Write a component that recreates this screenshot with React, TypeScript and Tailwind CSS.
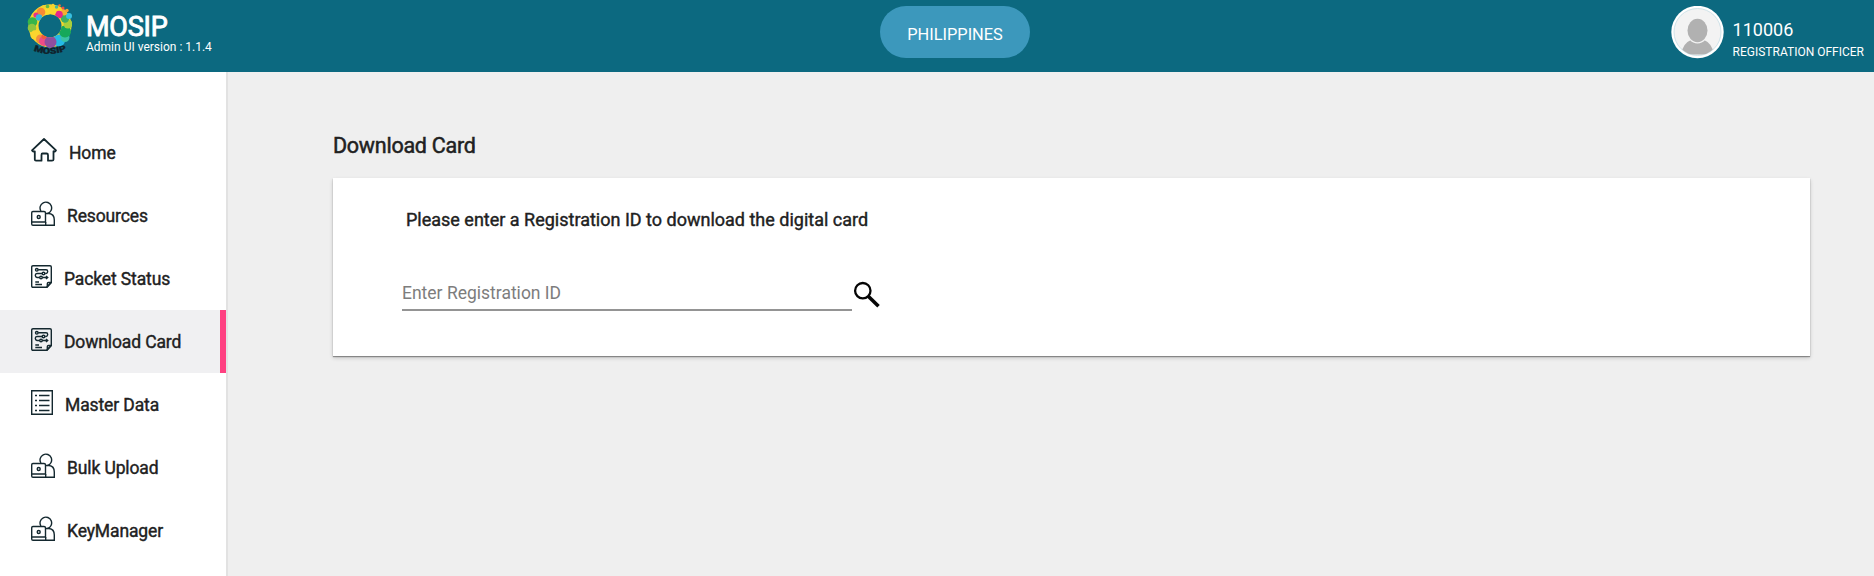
import React from "react";

function MosipLogo() {
  return (
    <svg width="49" height="56" viewBox="0 0 49 56" className="block">
      <defs>
        <clipPath id="ring">
          <path clipRule="evenodd" d="M0 0H47V56H0Z M25 14.200a11.500 11.500 0 1 0 .01 0Z" />
        </clipPath>
      </defs>
      <g clipPath="url(#ring)">
        <circle cx="25" cy="25.700" r="16" fill="none" stroke="#f6d52b" strokeWidth="11" />
        <circle cx="7.500" cy="22" r="4.800" fill="#36b54a" />
        <circle cx="7" cy="28" r="4.300" fill="#8fc43f" />
        <circle cx="10" cy="35" r="4.700" fill="#fbd52e" />
        <circle cx="15.500" cy="39" r="4.500" fill="#f4903a" />
        <circle cx="19" cy="41" r="5" fill="#ee4c86" />
        <circle cx="19" cy="36.500" r="2.500" fill="#ef5b3b" />
        <circle cx="34" cy="40.500" r="6" fill="#25b9e6" />
        <circle cx="25.500" cy="42" r="6" fill="#8f4f9f" />
        <circle cx="40" cy="37.500" r="4.500" fill="#3ac2a5" />
        <circle cx="40" cy="31.500" r="6" fill="#16a85a" />
        <circle cx="43" cy="24" r="4.500" fill="#a8cf3b" />
        <circle cx="40" cy="18.500" r="4.200" fill="#3faf62" />
        <circle cx="44" cy="16" r="3" fill="#38bfe0" />
        <circle cx="39" cy="12.500" r="3" fill="#f5b02e" />
        <circle cx="34" cy="14.500" r="3.800" fill="#e6278b" />
        <circle cx="28" cy="11" r="3.400" fill="#fbd62e" />
        <circle cx="22" cy="12" r="3.500" fill="#fbdb2f" />
        <circle cx="16" cy="12" r="4.300" fill="#f68a35" />
        <circle cx="11" cy="15" r="2.600" fill="#e8308a" />
        <circle cx="14" cy="17.500" r="3.200" fill="#34b6dc" />
      </g>
      <circle cx="18.500" cy="6.500" r="1.500" fill="#f3d034" />
      <circle cx="22.500" cy="6.500" r="1.800" fill="#63bb46" />
      <circle cx="28" cy="5" r="1.300" fill="#f3d034" />
      <circle cx="31.500" cy="7" r="1.700" fill="#46b8a0" />
      <circle cx="34.500" cy="5.500" r="1.300" fill="#f36c32" />
      <circle cx="38" cy="8" r="1.500" fill="#ef4e46" />
      <circle cx="42" cy="10.500" r="1.700" fill="#f3a034" />
      <path id="arc" d="M8.500 50.500Q25 57.500 43 50" fill="none" />
      <text fill="#10222b" stroke="#10222b" strokeWidth="0.300" fontFamily="Roboto, sans-serif" fontSize="8.500" fontWeight="900">
        <textPath href="#arc" startOffset="0" textLength="34" lengthAdjust="spacingAndGlyphs">MOSIP</textPath>
      </text>
    </svg>
  );
}

function HomeIcon() {
  return (
    <svg width="26" height="24" viewBox="0 0 26 24" fill="none" stroke="#14282f" strokeWidth="1.800" strokeLinejoin="round" className="block">
      <path d="M13 1L25 12.300Q24.500 14 22.500 13.300V21.500Q22.500 22.700 21 22.700H17V17Q17 15.500 15.500 15.500H11.500Q10.500 15.500 10.500 17V22.700H5Q3.800 22.700 3.800 21.500V13.300Q1.500 14 1 12.300Z" />
    </svg>
  );
}

function OperatorIcon() {
  return (
    <svg width="24" height="25" viewBox="0 0 24 25" fill="none" stroke="#14282f" strokeWidth="1.400" className="block">
      <path d="M9.900 10A5.800 5.800 0 1 1 16.500 12.500" />
      <path d="M.7 21V11.700Q.7 10.500 2 10.500H13Q14.500 10.500 14.500 12V21Z" />
      <path d="M.7 21V23Q.7 24.300 2 24.300H23.300V19Q23.300 13 18 12.500H14.500M14.700 21V24.300" />
      <circle cx="7.700" cy="16" r="1.500" />
    </svg>
  );
}

function PacketIcon() {
  return (
    <svg width="21" height="23" viewBox="0 0 21 23" fill="none" stroke="#14282f" strokeWidth="1.400" className="block">
      <path d="M2 .7H19Q20.300.7 20.300 2V17.500L15.500 22.300H2Q.7 22.300.7 21V2Q.7.700 2 .7Z" />
      <path d="M20.300 17.500H17.500Q16.300 17.500 16.300 18.700V22Z" />
      <circle cx="5.800" cy="4.800" r="1.300" />
      <path d="M7.200 4.800H15Q16.700 4.800 16.700 6.500T15 8.500H14.200" />
      <circle cx="12.500" cy="8.500" r="1.300" />
      <path d="M11 8.500H6Q4.300 8.500 4.300 10.300T6 12.500H8.500" />
      <circle cx="10" cy="12.500" r="1.300" />
      <path d="M11.500 12.500H16.500M15 11L16.700 12.500L15 14M4.300 17H8M4.300 19.500H11" />
    </svg>
  );
}

function ListIcon() {
  return (
    <svg width="22" height="25" viewBox="0 0 22 25" fill="none" stroke="#14282f" strokeWidth="1.400" className="block">
      <path d="M.7.700H21.300V24.300H.7Z" />
      <path d="M4 5.500H6M8 5.500H18.500M4 10.500H6M8 10.500H18.500M4 15.500H6M8 15.500H18.500M4 20.500H6M8 20.500H18.500" />
    </svg>
  );
}

const items = [
  { label: "Home", Icon: HomeIcon },
  { label: "Resources", Icon: OperatorIcon },
  { label: "Packet Status", Icon: PacketIcon },
  { label: "Download Card", Icon: PacketIcon, active: true },
  { label: "Master Data", Icon: ListIcon },
  { label: "Bulk Upload", Icon: OperatorIcon },
  { label: "KeyManager", Icon: OperatorIcon },
];

export default function App() {
  return (
    <div className="flex h-[576px] flex-col overflow-hidden bg-[#efefef] font-['Roboto',sans-serif] text-[#212121]">
      <header className="flex h-[72px] shrink-0 bg-[#0c6980] text-white">
        <div className="flex w-[880px] shrink-0 pl-[25px]">
          <MosipLogo />
          <div className="pt-[11px] pl-[12px]">
            <div className="text-[27px] leading-[32px] tracking-[-0.2px] [-webkit-text-stroke:0.9px_white]">MOSIP</div>
            <div className="text-[12px] leading-[8px]">Admin UI version : 1.1.4</div>
          </div>
        </div>
        <div className="mt-[6px] flex h-[52px] w-[150px] shrink-0 items-center justify-center rounded-full bg-[#3c98bc] pt-[6px] text-[16.4px]">
          PHILIPPINES
        </div>
        <div className="flex flex-1 justify-end pr-[10px]">
          <svg width="53" height="53" viewBox="0 0 53 53" className="mt-[6px]">
            <defs>
              <clipPath id="avatar">
                <circle cx="26.500" cy="26" r="23.500" />
              </clipPath>
            </defs>
            <circle cx="26.500" cy="26" r="26.200" fill="#fff" />
            <circle cx="26.500" cy="26" r="23.500" fill="#f3f3f3" stroke="#c5dde5" strokeWidth="0.800" />
            <g clipPath="url(#avatar)">
              <path d="M10 48.500Q12 37 20 34H33Q41 37 43 48.500Z" fill="#b1b1b1" />
              <ellipse cx="26.500" cy="24.500" rx="11" ry="13" fill="#f3f3f3" />
              <ellipse cx="26.500" cy="24.500" rx="10" ry="11.700" fill="#b1b1b1" />
            </g>
          </svg>
          <div className="pt-[19px] pl-[9px]">
            <div className="text-[18px] leading-[22px]">110006</div>
            <div className="text-[12px] leading-[22px]">REGISTRATION OFFICER</div>
          </div>
        </div>
      </header>
      <div className="flex flex-1">
        <nav className="w-[228px] shrink-0 border-r-2 border-[#e2e2e2] bg-white pt-[49px]">
          {items.map(({ label, Icon, active }) => (
            <a
              key={label}
              className={`flex h-[63px] items-center gap-[12px] pl-[31px] ${active ? "border-r-[6px] border-[#ff4081] bg-[#f0f0f2]" : ""}`}
            >
              <span className="pb-[5px]">
                <Icon />
              </span>
              <span className="pt-[1px] text-[17.5px] leading-[24px] tracking-[-0.12px] [-webkit-text-stroke:0.4px_#212121]">
                {label}
              </span>
            </a>
          ))}
        </nav>
        <main className="flex-1 pt-[58px] pr-[64px] pl-[105px]">
          <h1 className="h-[48px] pt-[1px] text-[21.5px] leading-[30px] font-normal tracking-[-0.25px] [-webkit-text-stroke:0.5px_#212121]">
            Download Card
          </h1>
          <section className="h-[178px] bg-white pt-[30px] pl-[69px] shadow-[0_1px_1px_rgba(0,0,0,0.35),0_2px_4px_rgba(0,0,0,0.18)]">
            <p className="pl-[4px] text-[18px] leading-[24px] [-webkit-text-stroke:0.4px_#212121]">
              Please enter a Registration ID to download the digital card
            </p>
            <div className="mt-[40px] flex">
              <input
                placeholder="Enter Registration ID"
                className="h-[39px] w-[450px] border-b-2 border-[#949494] bg-transparent pt-[5px] text-[17.5px] outline-none placeholder:text-[#7d7d7d]"
              />
              <svg width="28" height="28" viewBox="0 0 28 28" fill="none" stroke="#050505" className="mt-[9px]">
                <circle cx="10.800" cy="9.700" r="7.700" strokeWidth="2.300" />
                <path d="M16 15L26.500 25.300" strokeWidth="3.600" />
              </svg>
            </div>
          </section>
        </main>
      </div>
    </div>
  );
}
